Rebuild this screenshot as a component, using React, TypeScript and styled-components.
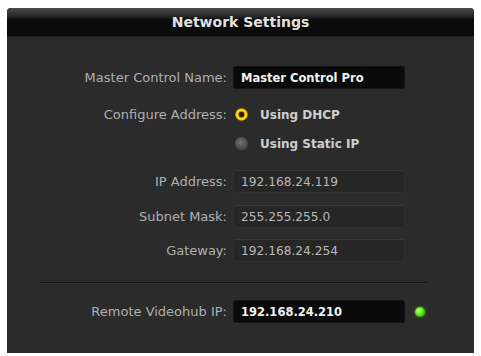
import React from "react";
import styled, { createGlobalStyle } from "styled-components";

const GlobalStyle = createGlobalStyle`
  html, body {
    margin: 0;
    padding: 0;
    background: #ffffff;
  }
  body {
    font-family: "DejaVu Sans", "Liberation Sans", sans-serif;
  }
`;

const Panel = styled.div`
  margin: 8px 0 0 7px;
  width: 467px;
  height: 345px;
  background: #2b2b2b;
  border-radius: 4px 4px 0 0;
  overflow: hidden;
`;

const TitleBar = styled.div`
  height: 28px;
  display: flex;
  align-items: center;
  justify-content: center;
  background: linear-gradient(
    #4a4a4a 0%,
    #262626 30%,
    #0b0b0b 42%,
    #0b0b0b 100%
  );
  border-bottom: 1px solid #1c1c1c;
  color: #e2e2e2;
  font-weight: bold;
  font-size: 14px;
  text-shadow: 0 1px 1px #000;
`;

const Form = styled.div`
  display: flex;
  flex-direction: column;
`;

const Row = styled.div<{ $mt: number }>`
  display: grid;
  grid-template-columns: 220px 172px 1fr;
  column-gap: 6px;
  align-items: center;
  height: 23px;
  margin-top: ${(p) => p.$mt}px;
`;

const Label = styled.span`
  text-align: right;
  color: #b0b0b0;
  font-size: 13px;
  white-space: nowrap;
`;

const Field = styled.div<{ $active?: boolean }>`
  box-sizing: border-box;
  height: 23px;
  display: flex;
  align-items: center;
  padding-left: 7px;
  border-radius: 3px;
  font-size: ${(p) => (p.$active ? "11.5px" : "12.2px")};
  font-weight: ${(p) => (p.$active ? "bold" : "normal")};
  white-space: nowrap;
  background: ${(p) => (p.$active ? "#0a0a0a" : "#262626")};
  color: ${(p) => (p.$active ? "#f2f2f2" : "#b8b8b8")};
  border: 1px solid ${(p) => (p.$active ? "#151515" : "#303030")};
  border-top-color: ${(p) => (p.$active ? "#111" : "#383838")};
`;

const RadioOption = styled.div`
  display: flex;
  align-items: center;
  gap: 12px;
  padding-left: 2px;
  color: #cfcfcf;
  font-size: 12px;
  font-weight: bold;
  white-space: nowrap;
`;

const RadioDot = styled.span<{ $checked?: boolean }>`
  width: 13px;
  height: 13px;
  border-radius: 50%;
  flex: none;
  background: ${(p) =>
    p.$checked
      ? "radial-gradient(circle, #3a1c00 0 2.5px, #b58a00 3px, #ffe21a 4px, #f2c800 5.5px, #6b5200 6.5px)"
      : "radial-gradient(circle at 45% 40%, #727272 0, #5a5a5a 4px, #4a4a4a 6.5px)"};
`;

const Separator = styled.div`
  margin: 20px 0 0 33px;
  width: 388px;
  height: 1px;
  background: #161616;
  border-bottom: 1px solid #353535;
`;

const Led = styled.span`
  width: 10px;
  height: 10px;
  margin-left: 4px;
  border-radius: 50%;
  background: radial-gradient(circle at 40% 40%, #d6ff9a 0, #7dff2a 2.5px, #3fcf10 5px);
  box-shadow: 0 0 3px rgba(90, 230, 40, 0.6);
`;

const App = () => {
  return (
    <>
      <GlobalStyle />
      <Panel>
        <TitleBar>Network Settings</TitleBar>
        <Form>
          <Row $mt={29}>
            <Label>Master Control Name:</Label>
            <Field $active>Master Control Pro</Field>
          </Row>
          <Row $mt={14}>
            <Label>Configure Address:</Label>
            <RadioOption>
              <RadioDot $checked />
              Using DHCP
            </RadioOption>
          </Row>
          <Row $mt={6}>
            <span />
            <RadioOption>
              <RadioDot />
              Using Static IP
            </RadioOption>
          </Row>
          <Row $mt={15}>
            <Label>IP Address:</Label>
            <Field>192.168.24.119</Field>
          </Row>
          <Row $mt={12}>
            <Label>Subnet Mask:</Label>
            <Field>255.255.255.0</Field>
          </Row>
          <Row $mt={11}>
            <Label>Gateway:</Label>
            <Field>192.168.24.254</Field>
          </Row>
          <Separator />
          <Row $mt={16}>
            <Label>Remote Videohub IP:</Label>
            <Field $active>192.168.24.210</Field>
            <Led />
          </Row>
        </Form>
      </Panel>
    </>
  );
};

export default App;
